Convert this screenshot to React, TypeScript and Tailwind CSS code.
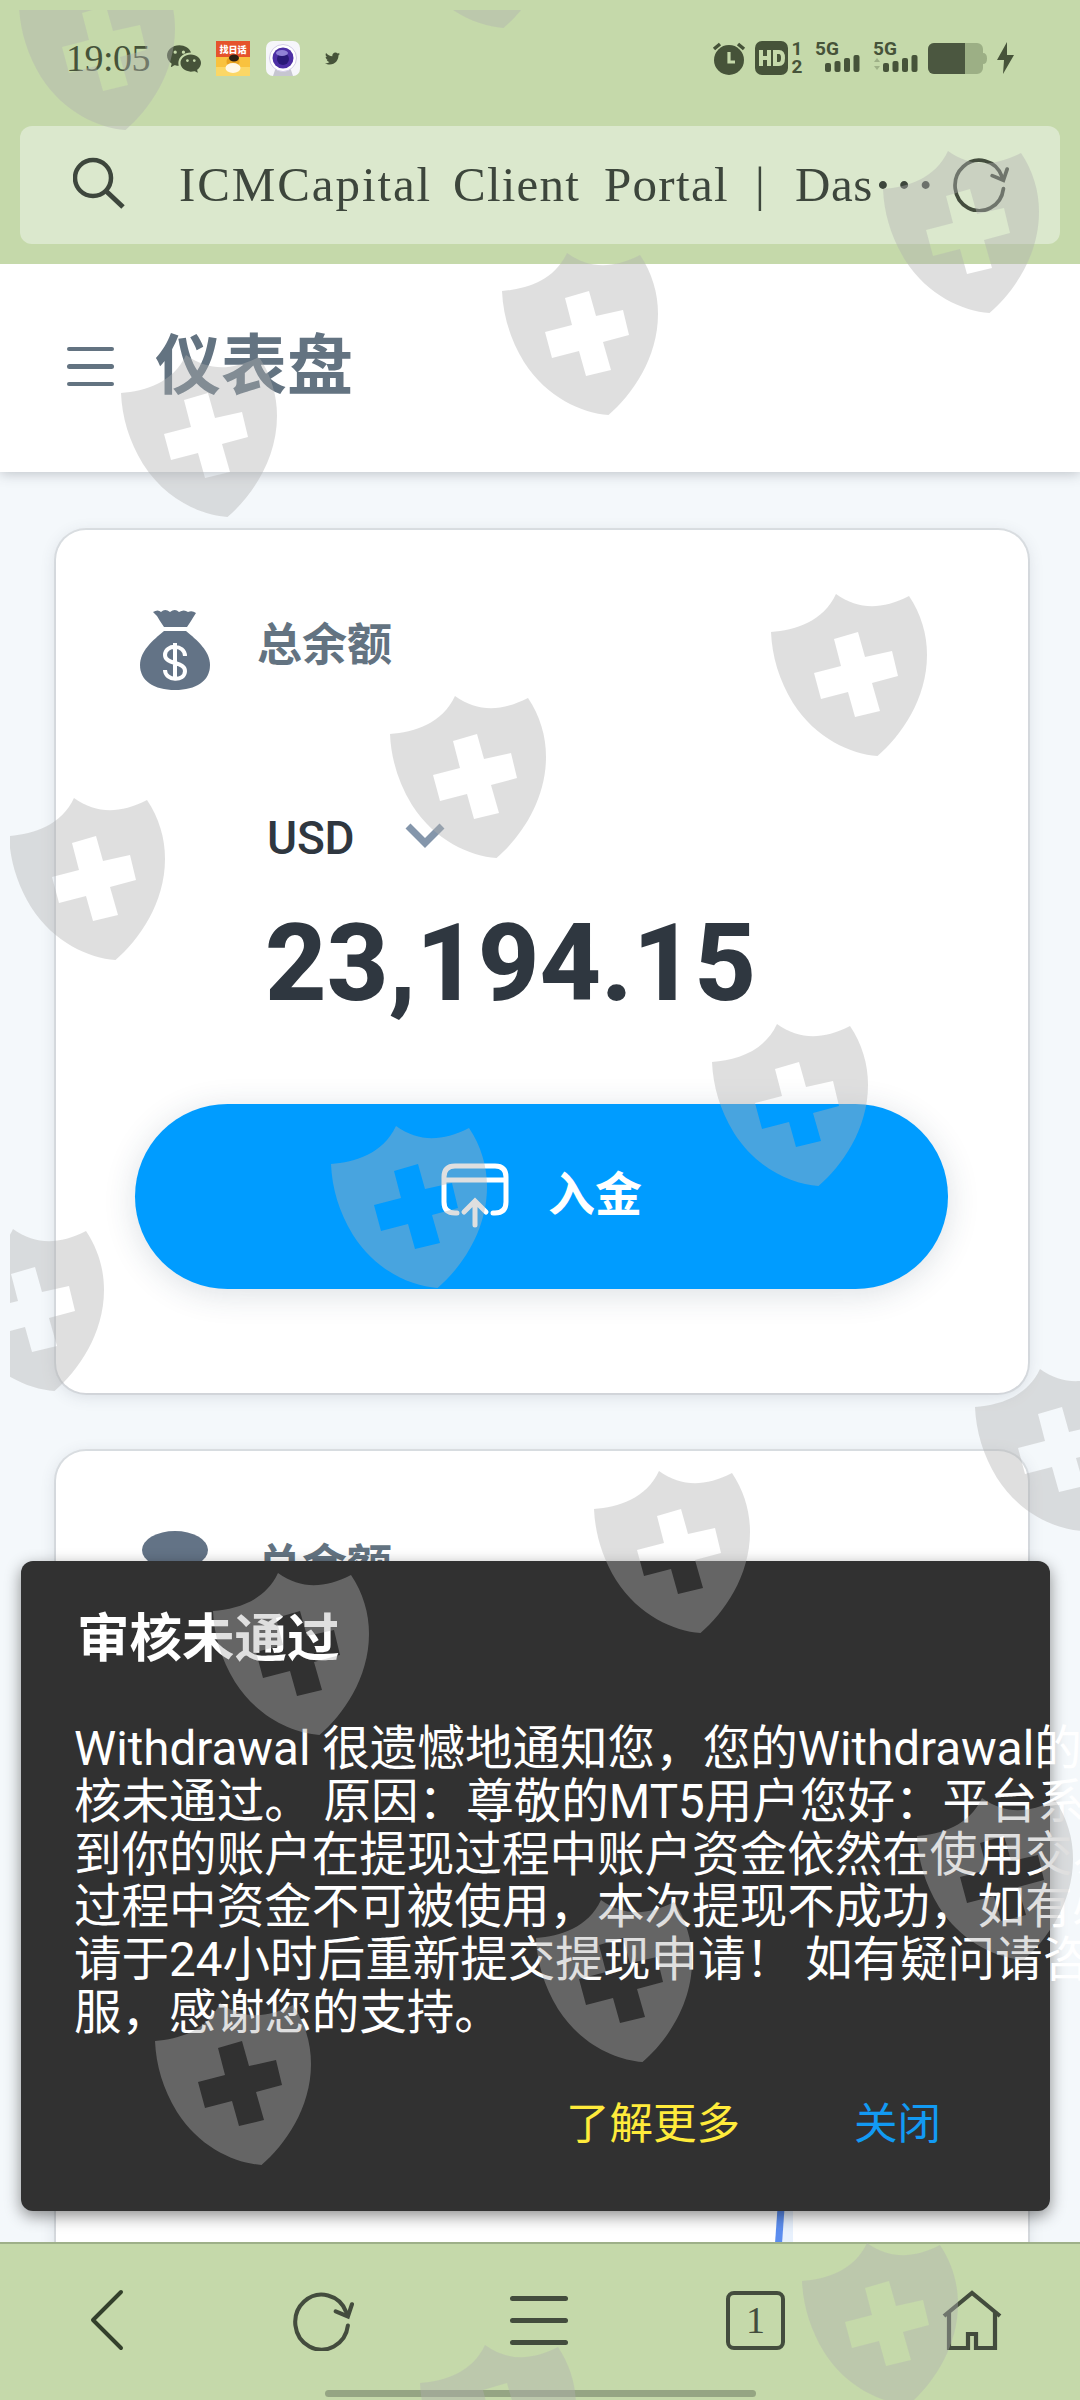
import clsx from "clsx";
import { ReactNode } from "react";
import { BsWechat } from "react-icons/bs";
import { FaTwitter } from "react-icons/fa";

const SANS = "font-[Roboto,'Noto_Sans_CJK_SC',sans-serif]";
const SERIF = "font-['Liberation_Serif','Noto_Sans_CJK_SC',serif]";

const SHIELDS = [
  [19, -32],
  [397, -134],
  [883, 151],
  [502, 253],
  [121, 355],
  [771, 594],
  [390, 696],
  [9, 798],
  [712, 1024],
  [331, 1126],
  [-52, 1229],
  [975, 1369],
  [594, 1471],
  [213, 1573],
  [917, 1798],
  [536, 1900],
  [155, 2003],
  [802, 2243],
  [420, 2345],
];

const MESSAGE = [
  "Withdrawal 很遗憾地通知您，您的Withdrawal的审",
  "核未通过。 原因：尊敬的MT5用户您好：平台系统",
  "到你的账户在提现过程中账户资金依然在使用交易",
  "过程中资金不可被使用，本次提现不成功，如有必",
  "请于24小时后重新提交提现申请！ 如有疑问请咨询客",
  "服，感谢您的支持。",
];

function Watermark() {
  return (
    <svg
      className="absolute top-[10px] left-[10px] pointer-events-none"
      width="1070"
      height="2390"
      viewBox="10 10 1070 2390"
      fill="#b0b0b0"
      fillOpacity="0.408"
      fillRule="evenodd"
    >
      {SHIELDS.map(([x, y]) => (
        <path
          key={`${x}-${y}`}
          transform={`translate(${x} ${y})`}
          d="M0 38C24 36 52 28 65 0C88 16 110 16 138 2C150 20 156 40 156 61C156 105 130 142 106.500 162C80 160 45 145 22 109C8 86 1 62 0 38ZM63 45L87 38L94 63L121 57L127 82L101 89L109 117L84 123L77 98L50 105L43 79L70 72Z"
        />
      ))}
    </svg>
  );
}

function Signal({ arrows }: { arrows?: boolean }) {
  return (
    <div className="relative w-[46px] h-[34px]">
      <span className="block text-[19px] leading-[15px] font-bold">5G</span>
      <svg className="absolute left-0 top-0" width="46" height="34" viewBox="0 0 46 34" fill="#465339">
        {arrows && <path d="M1 21l3-4 3 4zM1 25l3 4 3-4z" opacity="0.3" />}
        <rect x="10" y="22" width="6" height="9" rx="2" />
        <rect x="19.500" y="20" width="6" height="11" rx="2" />
        <rect x="29" y="17" width="6" height="14" rx="2" />
        <rect x="38.500" y="14" width="6" height="17" rx="2" />
      </svg>
    </div>
  );
}

function StatusBar() {
  return (
    <div className="flex justify-between h-[126px] pt-[38px] pl-[66px] pr-[66px] text-[#465339]">
      <div className="flex items-center h-10">
        <span className={clsx(SERIF, "text-[38px] leading-none w-[101px] tracking-[-0.5px]")}>19:05</span>
        <BsWechat className="w-[34px] h-[34px]" />
        <svg className="ml-[15px]" width="34" height="35" viewBox="0 0 34 35">
          <rect width="34" height="35" fill="#f9c23f" />
          <rect y="26" width="34" height="9" fill="#fbd766" />
          <rect width="34" height="16" fill="#e5532c" />
          <text x="3.500" y="12" fontSize="9" fontWeight="900" fill="#fff" fontFamily="'Noto Sans CJK SC', sans-serif">
            找日话
          </text>
          <circle cx="17" cy="21" r="6.500" fill="#e9a321" />
          <ellipse cx="18" cy="17" rx="5" ry="3.500" fill="#2c2013" />
          <ellipse cx="17" cy="27" rx="7.500" ry="5" fill="#fff8e6" />
        </svg>
        <svg className="ml-4" width="34" height="35" viewBox="0 0 34 35">
          <rect width="34" height="35" rx="7" fill="#f6f6fa" />
          <path d="M7 35l3-9h14l3 9z" fill="#c6c6d0" />
          <circle cx="17" cy="17" r="13.500" fill="#fff" stroke="#d4cde8" />
          <circle cx="17" cy="17" r="10.500" fill="#4d2fa5" />
          <circle cx="17" cy="18" r="6" fill="#2a1a78" />
          <ellipse cx="16" cy="12" rx="6" ry="3" fill="#9182d6" />
        </svg>
        <FaTwitter className="ml-[25px] w-[15px] h-[15px]" />
      </div>
      <div className="flex items-center h-10">
        <svg width="34" height="34" viewBox="0 0 34 34">
          <circle cx="17" cy="19" r="15" fill="#465339" />
          <path d="M2 8l6-5M32 8l-6-5" stroke="#465339" strokeWidth="3.500" />
          <path d="M17 11v10h6" fill="none" stroke="#c5d9aa" strokeWidth="3.200" />
        </svg>
        <svg className="ml-[9px]" width="33" height="34" viewBox="0 0 33 34">
          <rect width="33" height="34" rx="7" fill="#465339" />
          <path d="M6 9v16M14 9v16M6 17h8M20 11h4q4 0 4 6t-4 6h-4z" fill="none" stroke="#c5d9aa" strokeWidth="4" />
        </svg>
        <div className="flex flex-col items-center w-[14px] ml-[2px] text-[19px] leading-[18px] font-bold">
          <span>1</span>
          <span>2</span>
        </div>
        <div className="flex ml-[11px] gap-3">
          <Signal />
          <Signal arrows />
        </div>
        <svg className="ml-[9px]" width="60" height="31" viewBox="0 0 60 31">
          <path d="M6 0h43a6 6 0 0 1 6 6v4q4 0 4 5.500t-4 5.500v4a6 6 0 0 1-6 6H6a6 6 0 0 1-6-6V6a6 6 0 0 1 6-6z" fill="#9caf85" />
          <path d="M6 0h31v31H6a6 6 0 0 1-6-6V6a6 6 0 0 1 6-6z" fill="#4b5740" />
        </svg>
        <svg className="ml-[9px]" width="17" height="32" viewBox="0 0 17 32">
          <path d="M10 0L0 18h7l-1 14L17 13H10z" fill="#465339" />
        </svg>
      </div>
    </div>
  );
}

function RefreshIcon({ size, className }: { size: number; className?: string }) {
  return (
    <svg
      className={className}
      width={size}
      height={size}
      viewBox="0 0 60 60"
      fill="none"
      stroke="#434c3d"
      strokeWidth="4"
      strokeLinecap="round"
    >
      <path d="M54 35A26 27 0 1 1 52.500 22" />
      <path d="M42 21L54 26L58 14" />
    </svg>
  );
}

function AddressBar() {
  return (
    <div className="flex items-center h-[118px] mx-5 rounded-xl bg-[#dbe8cd] text-[#3d463c]">
      <svg className="ml-[53px] -mt-1" width="52" height="52" viewBox="0 0 52 52" fill="none" stroke="currentColor" strokeWidth="4.500">
        <circle cx="20" cy="21" r="18" />
        <path d="M33 34L50 50" strokeWidth="5" />
      </svg>
      <div className={clsx(SERIF, "flex -mt-[2px] ml-[54px] text-[49px] leading-none whitespace-nowrap")}>
        <span className="w-[274px] tracking-[1.900px]">ICMCapital</span>
        <span className="w-[151px] tracking-[1.200px]">Client</span>
        <span className="w-[151px] tracking-[1.300px]">Portal</span>
        <span className="w-[40px]">|</span>
        <span className="tracking-[0.5px]">Das</span>
        <span className="tracking-[5px] ml-[2px] font-bold">···</span>
      </div>
      <RefreshIcon size={56} className="ml-auto mr-[51px] -mt-[2px]" />
    </div>
  );
}

function PageHeader() {
  return (
    <div className="flex items-center h-[208px] bg-white pl-[67px] shadow-[0_2px_12px_rgba(70,75,90,0.3)] relative">
      <div className="flex flex-col gap-[13px] w-[47px] -mt-[3px]">
        <div className="h-[4.500px] rounded bg-[#637381]" />
        <div className="h-[4.500px] rounded bg-[#637381]" />
        <div className="h-[4.500px] rounded bg-[#637381]" />
      </div>
      <h1 className="ml-[41px] -mt-[3px] text-[66px] leading-none font-bold text-[#637381]">仪表盘</h1>
    </div>
  );
}

function MoneyBag() {
  return (
    <svg width="72" height="82" viewBox="0 0 72 82" fill="#637386">
      <path d="M14 3q5-3 8 0 4-4 9 0 5-4 9 0 5-3 9 0 4-2 8 1-2 3-5 8l-4 6H25l-4-6q-3-6-7-9z" />
      <path d="M25 22h22C58 31 71 42 71 56 71 72 57 81 36 81S1 72 1 56C1 42 14 31 25 22z" />
      <path d="M46 47c0-12-20-12-20-1 0 10 20 6 20 16 0 11-20 10-20-1M36 34v37" fill="none" stroke="#fff" strokeWidth="4" />
    </svg>
  );
}

function Card({ children, className }: { children: ReactNode; className?: string }) {
  return (
    <div
      className={clsx(
        "shrink-0 w-[972px] rounded-[30px] bg-white shadow-[0_0_0_2px_rgba(0,0,0,0.08),0_3px_16px_rgba(60,70,90,0.15)]",
        className,
      )}
    >
      {children}
    </div>
  );
}

function BalanceCard() {
  return (
    <Card className="flex flex-col h-[863px] pt-[79px] px-[79px]">
      <div className="flex items-center h-[82px] pl-1">
        <MoneyBag />
        <h2 className="ml-[46px] -mt-[9px] text-[45px] leading-none font-bold text-[#637381]">总余额</h2>
      </div>
      <div className="flex items-center mt-[123px] h-12 pl-[132px] text-[#2f3740]">
        <span className="text-[46px] leading-none font-medium tracking-[-0.2px]">USD</span>
        <svg className="ml-[51px] -mt-1" width="40" height="26" viewBox="0 0 40 26" fill="none" stroke="#8496ab" strokeWidth="7">
          <path d="M3 3L20 20L37 3" />
        </svg>
      </div>
      <div className="mt-[48px] h-[106px] pl-[130px] text-[107px] leading-none font-extrabold text-[#2f3740]">23,194.15</div>
      <button className="shrink-0 flex justify-center items-center mt-[88px] w-[813px] h-[185px] rounded-full bg-[#009cff] text-white shadow-[0_5px_32px_rgba(40,60,90,0.16)]">
        <svg className="mt-[-2px]" width="68" height="66" viewBox="0 0 68 66" fill="none" stroke="#fff" strokeWidth="5" strokeLinecap="round">
          <path d="M16 50H14Q3 50 3 39V14Q3 3 14 3H54Q65 3 65 14V39Q65 50 54 50H52M3 17H65" />
          <path d="M34 62V40M23 49L34 38L45 49" />
        </svg>
        <span className="ml-[39px] -mt-1 text-[47px] leading-none font-bold">入金</span>
      </button>
    </Card>
  );
}

function EquityCard() {
  return (
    <Card className="mt-[58px] h-[900px] pt-[80px] pl-[86px]">
      <div className="flex h-[82px]">
        <svg width="66" height="60" viewBox="0 0 66 60" fill="#637386">
          <ellipse cx="33" cy="19" rx="33" ry="19" />
        </svg>
        <h2 className="ml-[49px] mt-[13px] text-[45px] leading-none font-bold text-[#637381]">总金额</h2>
      </div>
      <svg className="mt-[588px] ml-[604px]" width="48" height="50" viewBox="0 0 48 50">
        <rect x="33" width="14" height="50" fill="#e8f1fd" />
        <path d="M35.500 0L32 50" stroke="#5b8def" strokeWidth="7" />
      </svg>
    </Card>
  );
}

function Snackbar() {
  return (
    <div className="absolute left-[21px] top-[1561px] w-[1029px] h-[650px] rounded-[12px] bg-[#313131] text-white shadow-[0_5px_16px_rgba(0,0,0,0.45)]">
      <h3 className="pt-[52px] pl-[56px] text-[52.500px] leading-[53px] font-bold">审核未通过</h3>
      <div className="mt-[57px] pl-[53px] text-[47.550px] leading-[52.800px] whitespace-nowrap">
        {MESSAGE.map((line) => (
          <p key={line}>{line}</p>
        ))}
      </div>
      <div className="flex pt-[60px] pl-[545px] text-[43.500px] leading-[50px]">
        <button className="text-[#ffeb3b]">了解更多</button>
        <button className="ml-[114px] text-[#129af3]">关闭</button>
      </div>
    </div>
  );
}

function NavBar() {
  return (
    <div className="absolute left-0 top-[2242px] w-full h-[158px] flex flex-col justify-between items-center bg-[#c5d9aa] border-t-2 border-[#9eb089]">
      <div className="flex items-center w-full h-[152px] pl-[90px] text-[#434c3d]">
        <svg width="34" height="64" viewBox="0 0 34 64" fill="none" stroke="#33402b" strokeWidth="4" strokeLinecap="round" strokeLinejoin="round">
          <path d="M31 4L3 32L31 60" />
        </svg>
        <RefreshIcon size={61} className="ml-[169px]" />
        <div className="flex flex-col gap-[17px] w-[58px] ml-[156px]">
          <div className="h-[5px] rounded bg-current" />
          <div className="h-[5px] rounded bg-current" />
          <div className="h-[5px] rounded bg-current" />
        </div>
        <div
          className={clsx(
            SERIF,
            "flex justify-center items-center w-[59px] h-[59px] ml-[158px] border-[4.500px] border-current rounded-lg text-[38px] leading-none",
          )}
        >
          1
        </div>
        <svg className="ml-[157px]" width="60" height="61" viewBox="0 0 60 61" fill="none" stroke="currentColor" strokeWidth="4.200">
          <path d="M2 26L30 3L58 26M7 22V58H26V44H34V58H53V22" />
        </svg>
      </div>
      <div className="shrink-0 -mt-[10px] mb-[3px] w-[431px] h-[7px] rounded-full bg-[#95a583]" />
    </div>
  );
}

export default function App() {
  return (
    <div className={clsx(SANS, "relative flex flex-col w-[1080px] h-[2400px] overflow-hidden bg-[#f4f8fb]")}>
      <div className="relative z-10 shrink-0 h-[264px] bg-[#c5d9aa]">
        <StatusBar />
        <AddressBar />
      </div>
      <PageHeader />
      <div className="flex flex-col pt-[58px] pl-14">
        <BalanceCard />
        <EquityCard />
      </div>
      <Snackbar />
      <NavBar />
      <div className="absolute inset-0 z-20 pointer-events-none">
        <Watermark />
      </div>
    </div>
  );
}
